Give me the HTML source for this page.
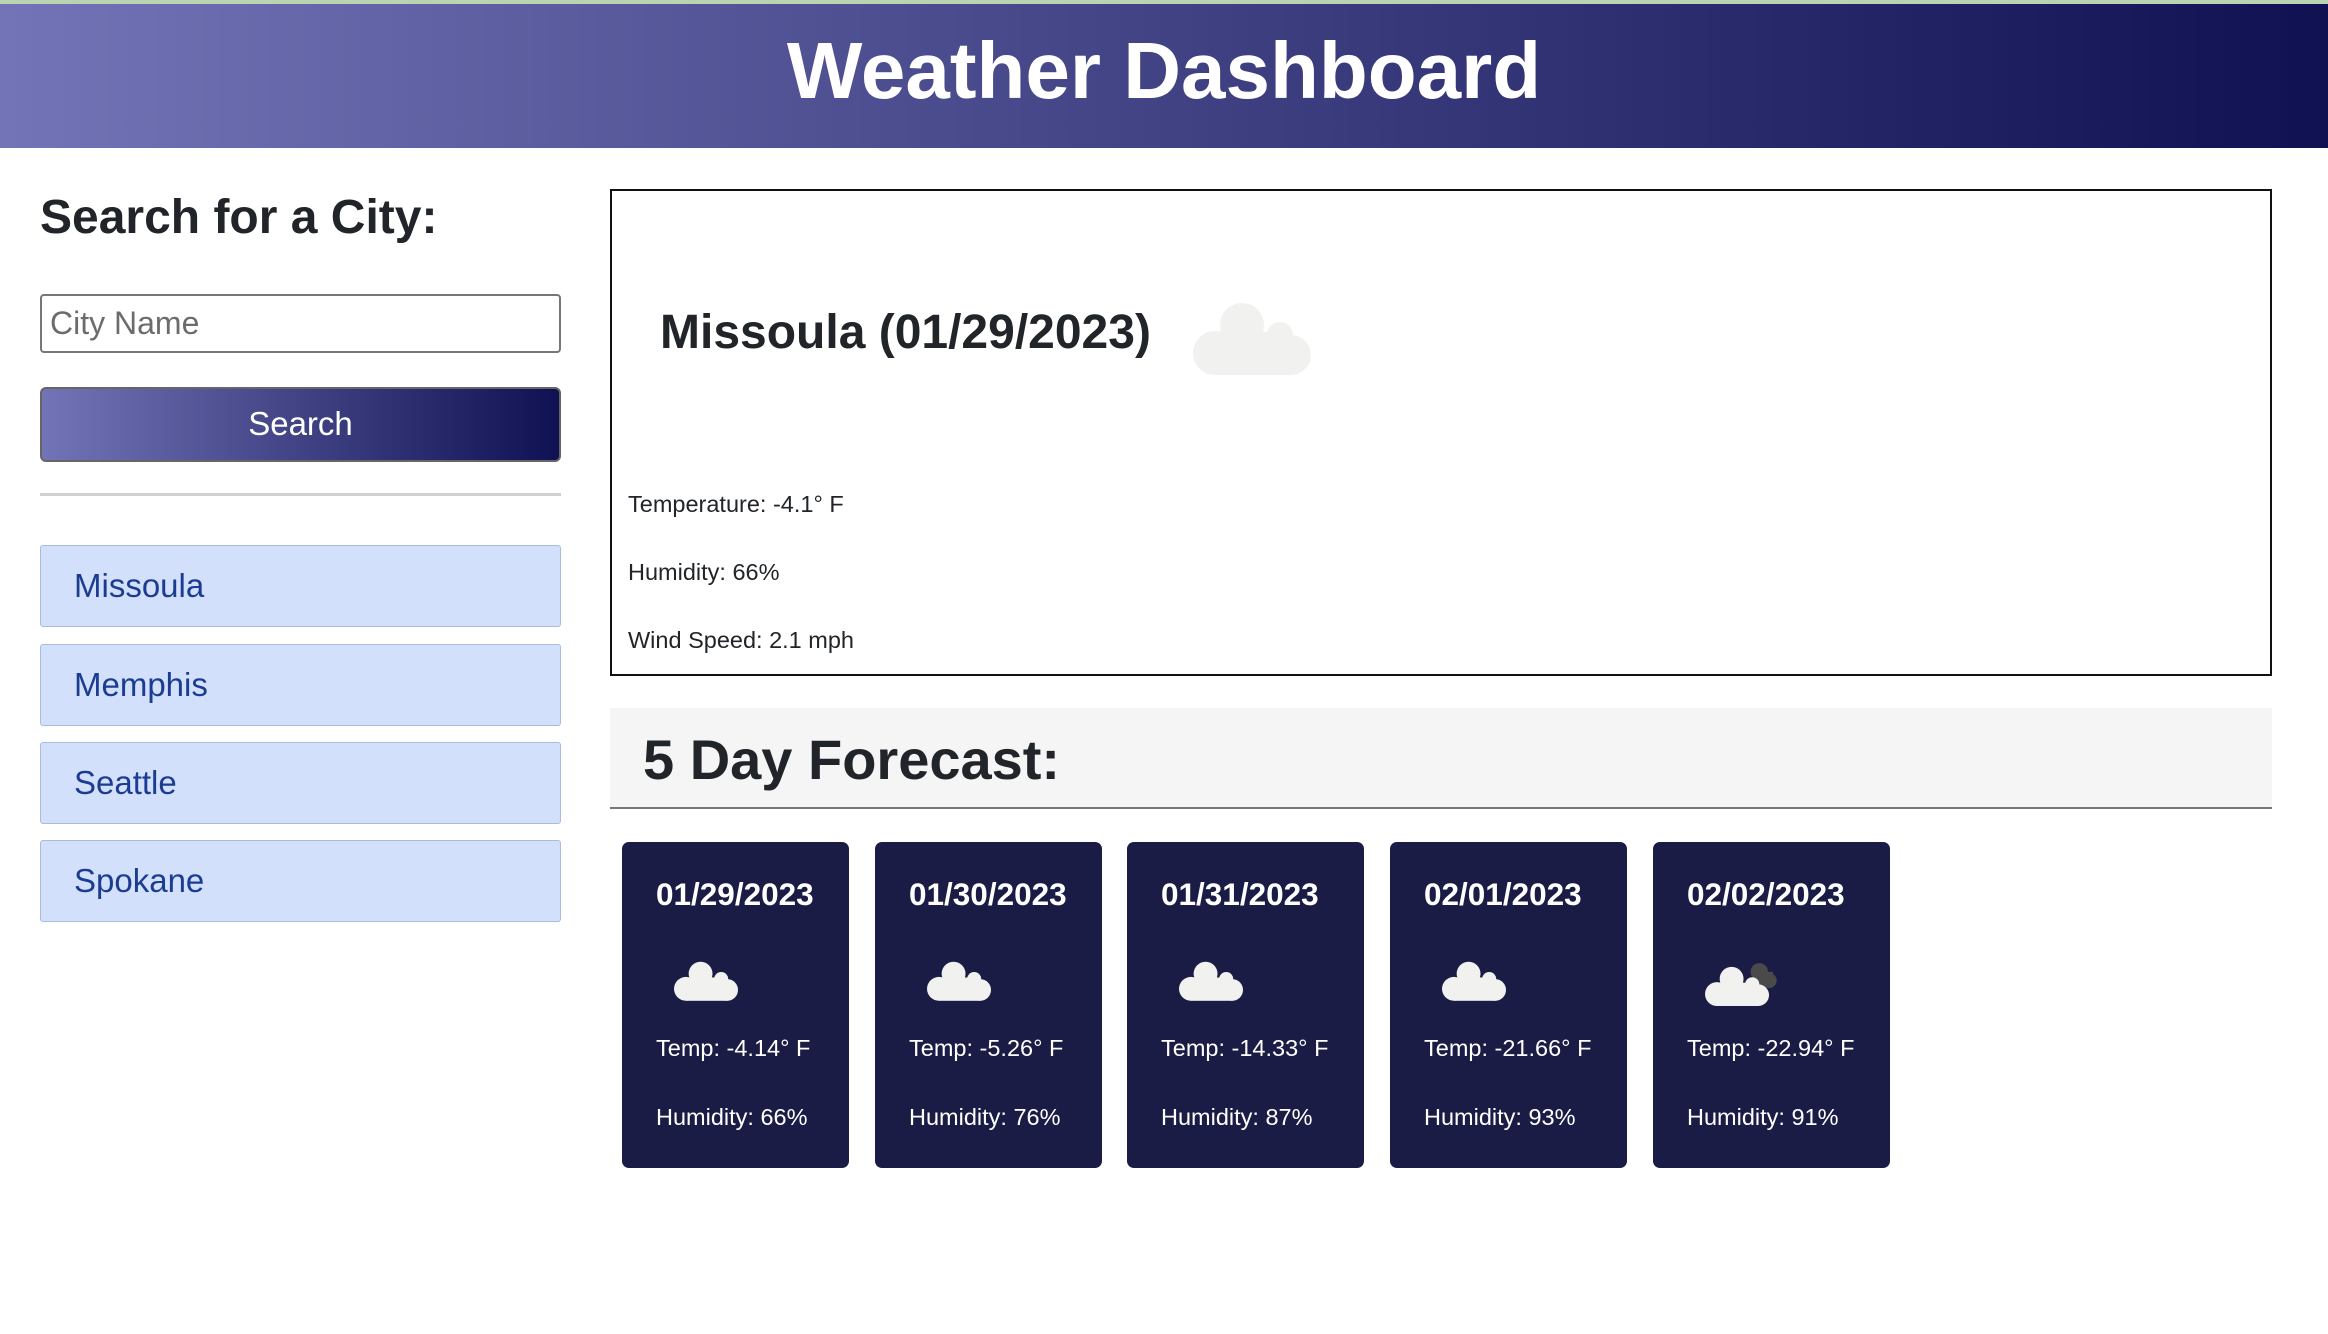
<!DOCTYPE html>
<html><head><meta charset="utf-8"><style>
*{margin:0;padding:0;box-sizing:border-box}
body{width:2328px;height:1334px;background:#fff;font-family:"Liberation Sans",sans-serif;position:relative;overflow:hidden;color:#212529}
.a{position:absolute}
#hdr{left:0;top:0;width:2328px;height:148px;background:linear-gradient(90deg,#7274b7,#0f1152);border-top:4px solid #b9d3b3}
#hdr h1{color:#fff;font-size:80px;font-weight:bold;text-align:center;line-height:134px}
.city{left:40px;width:521px;height:82px;background:#d3e0fb;border:1px solid #aabbe0;border-radius:3px;color:#1b3c90;font-size:33px;line-height:80px;padding-left:33px}
.card{top:842px;height:326px;background:#1b1c45;border-radius:7px;color:#fff}
.card .d{position:absolute;left:34px;top:34px;font-size:31.5px;font-weight:bold}
.card svg{position:absolute;left:52px;top:118px}
.card .p1{position:absolute;left:34px;top:193px;font-size:23.5px}
.card .p2{position:absolute;left:34px;top:262px;font-size:23.5px}
</style></head><body>
<div id="hdr" class="a"><h1>Weather Dashboard</h1></div>
<div class="a" style="left:40px;top:190px;font-size:48px;font-weight:bold;">Search for a City:</div>
<div class="a" style="left:40px;top:294px;width:521px;height:59px;border:2px solid #777;border-radius:4px;font-size:32px;color:#6c6c6c;line-height:55px;padding-left:8px">City Name</div>
<div class="a" style="left:40px;top:387px;width:521px;height:75px;border:2px solid #666;border-radius:6px;background:linear-gradient(90deg,#7274b7,#0f1152);color:#fff;font-size:33px;text-align:center;line-height:70px">Search</div>
<div class="a" style="left:40px;top:493px;width:521px;height:3px;background:#d0d0d0"></div>
<div class="a city" style="top:545px">Missoula</div>
<div class="a city" style="top:644px">Memphis</div>
<div class="a city" style="top:742px">Seattle</div>
<div class="a city" style="top:840px">Spokane</div>

<div class="a" style="left:610px;top:189px;width:1662px;height:487px;border:2px solid #111"></div>
<div class="a" style="left:660px;top:305px;font-size:48px;font-weight:bold">Missoula (01/29/2023)</div>
<svg class="a" style="left:1193px;top:302px" width="118" height="73" viewBox="0 0 118 73"><g fill="#f1f1f0"><circle cx="49" cy="23" r="22"/><circle cx="87" cy="33" r="13"/><circle cx="22" cy="51" r="22"/><circle cx="98" cy="53" r="20"/><rect x="22" y="30" width="77" height="43"/></g></svg>
<div class="a" style="left:628px;top:491px;font-size:23.5px">Temperature: -4.1° F</div>
<div class="a" style="left:628px;top:559px;font-size:23.5px">Humidity: 66%</div>
<div class="a" style="left:628px;top:627px;font-size:23.5px">Wind Speed: 2.1 mph</div>

<div class="a" style="left:610px;top:708px;width:1662px;height:101px;background:#f5f5f5;border-bottom:2px solid #777"></div>
<div class="a" style="left:643px;top:727px;font-size:56px;font-weight:bold">5 Day Forecast:</div>

<div class="a card" style="left:622px;width:227px"><div class="d">01/29/2023</div><svg width="64" height="42" viewBox="0 0 118 73"><g fill="#f1f1f0"><circle cx="49" cy="23" r="22"/><circle cx="87" cy="33" r="13"/><circle cx="22" cy="51" r="22"/><circle cx="98" cy="53" r="20"/><rect x="22" y="30" width="77" height="43"/></g></svg><div class="p1">Temp: -4.14° F</div><div class="p2">Humidity: 66%</div></div>
<div class="a card" style="left:875px;width:227px"><div class="d">01/30/2023</div><svg width="64" height="42" viewBox="0 0 118 73"><g fill="#f1f1f0"><circle cx="49" cy="23" r="22"/><circle cx="87" cy="33" r="13"/><circle cx="22" cy="51" r="22"/><circle cx="98" cy="53" r="20"/><rect x="22" y="30" width="77" height="43"/></g></svg><div class="p1">Temp: -5.26° F</div><div class="p2">Humidity: 76%</div></div>
<div class="a card" style="left:1127px;width:237px"><div class="d">01/31/2023</div><svg width="64" height="42" viewBox="0 0 118 73"><g fill="#f1f1f0"><circle cx="49" cy="23" r="22"/><circle cx="87" cy="33" r="13"/><circle cx="22" cy="51" r="22"/><circle cx="98" cy="53" r="20"/><rect x="22" y="30" width="77" height="43"/></g></svg><div class="p1">Temp: -14.33° F</div><div class="p2">Humidity: 87%</div></div>
<div class="a card" style="left:1390px;width:237px"><div class="d">02/01/2023</div><svg width="64" height="42" viewBox="0 0 118 73"><g fill="#f1f1f0"><circle cx="49" cy="23" r="22"/><circle cx="87" cy="33" r="13"/><circle cx="22" cy="51" r="22"/><circle cx="98" cy="53" r="20"/><rect x="22" y="30" width="77" height="43"/></g></svg><div class="p1">Temp: -21.66° F</div><div class="p2">Humidity: 93%</div></div>
<div class="a card" style="left:1653px;width:237px"><div class="d">02/02/2023</div><svg width="76" height="48" viewBox="0 -8 140 81"><g fill="#4a4a4a"><circle cx="100" cy="10" r="16"/><circle cx="118" cy="26" r="14"/><rect x="95" y="10" width="30" height="25"/></g><g fill="#f1f1f0"><circle cx="49" cy="23" r="22"/><circle cx="87" cy="33" r="13"/><circle cx="22" cy="51" r="22"/><circle cx="98" cy="53" r="20"/><rect x="22" y="30" width="77" height="43"/></g></svg><div class="p1">Temp: -22.94° F</div><div class="p2">Humidity: 91%</div></div>
</body></html>
